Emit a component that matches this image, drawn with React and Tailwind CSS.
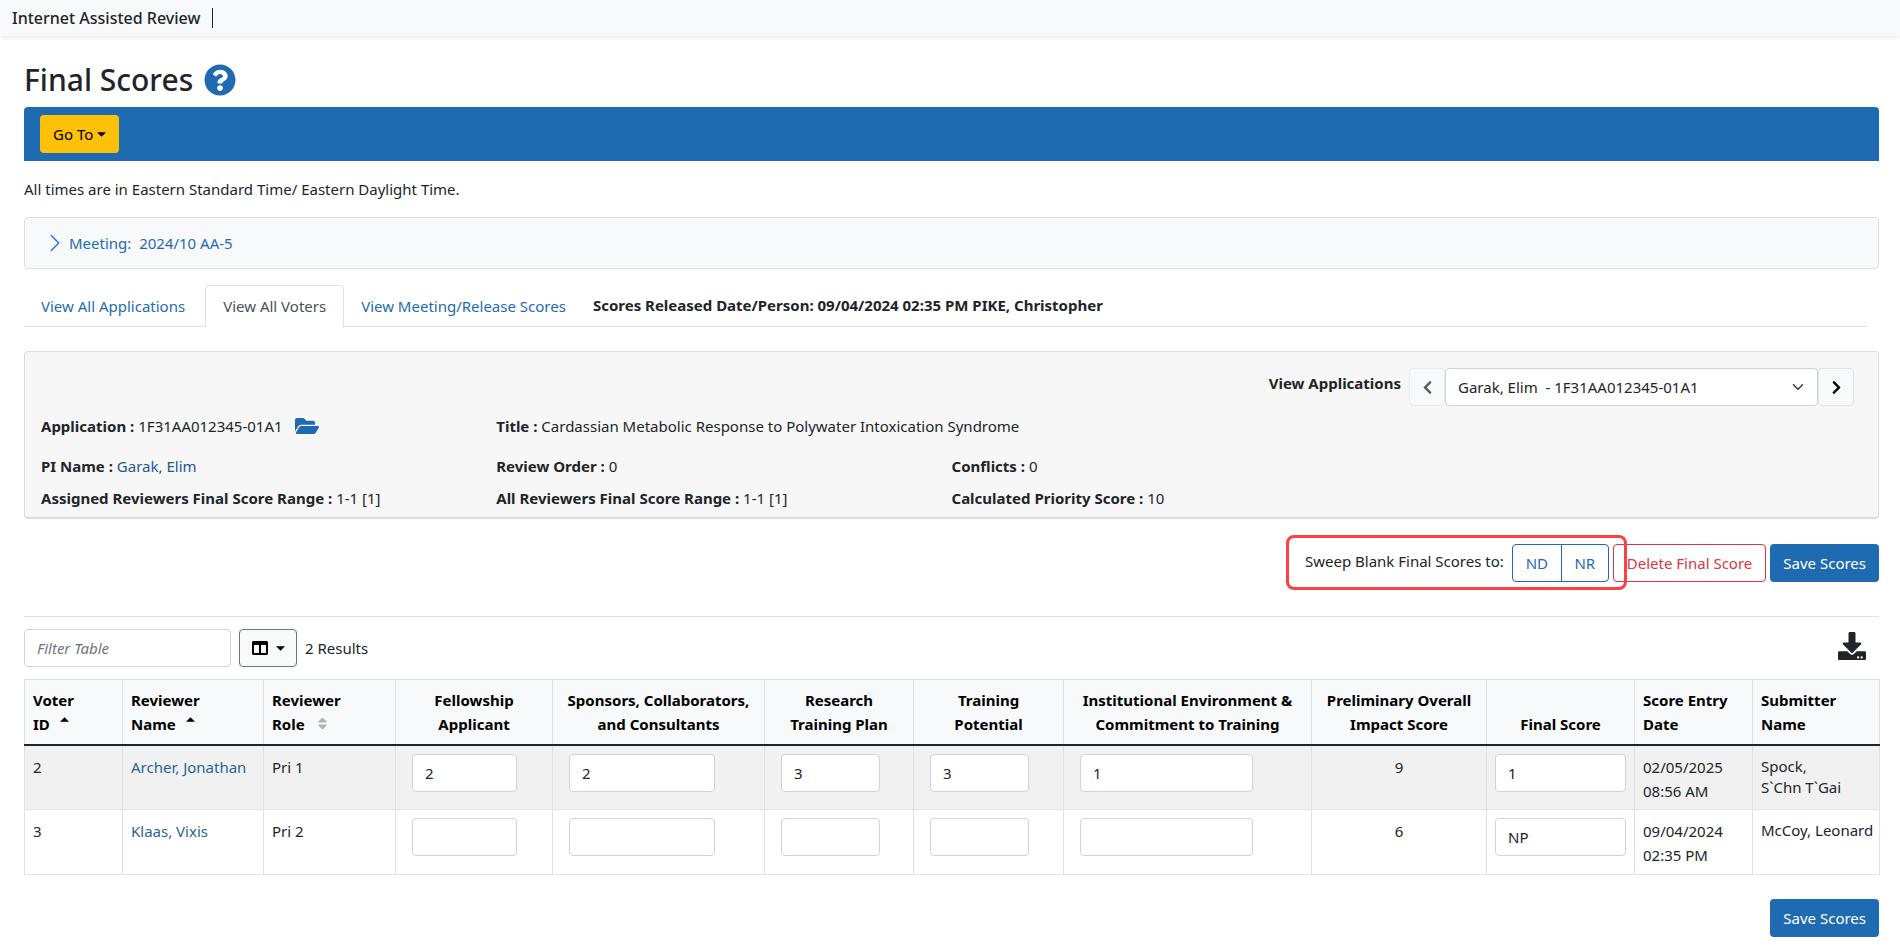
import { useState } from "react";
import {
  FaChevronLeft,
  FaChevronRight,
  FaColumns,
  FaDownload,
  FaFolderOpen,
  FaQuestionCircle,
  FaSort,
} from "react-icons/fa";
import { BsChevronRight } from "react-icons/bs";

const columns = [
  { key: "id", lines: ["Voter", "ID"], col: "w-[98px]", sort: "asc" },
  { key: "name", lines: ["Reviewer", "Name"], col: "w-[141px]", sort: "asc" },
  { key: "role", lines: ["Reviewer", "Role"], col: "w-[132px]", sort: "none" },
  { key: "applicant", lines: ["Fellowship", "Applicant"], col: "w-[157px]", input: "w-[105px]", center: true },
  { key: "sponsors", lines: ["Sponsors, Collaborators,", "and Consultants"], col: "w-[212px]", input: "w-[146px]", center: true },
  { key: "plan", lines: ["Research", "Training Plan"], col: "w-[149px]", input: "w-[99px]", center: true },
  { key: "potential", lines: ["Training", "Potential"], col: "w-[150px]", input: "w-[99px]", center: true },
  { key: "environment", lines: ["Institutional Environment &", "Commitment to Training"], col: "w-[248px]", input: "w-[173px]", center: true },
  { key: "impact", lines: ["Preliminary Overall", "Impact Score"], col: "w-[175px]", center: true },
  { key: "final", lines: ["Final Score"], col: "w-[148px]", input: "w-full", center: true },
  { key: "date", lines: ["Score Entry", "Date"], col: "w-[118px]" },
  { key: "submitter", lines: ["Submitter", "Name"], col: "w-[127px]" },
];

const initialRows = [
  {
    id: "2",
    name: "Archer, Jonathan",
    role: "Pri 1",
    applicant: "2",
    sponsors: "2",
    plan: "3",
    potential: "3",
    environment: "1",
    impact: "9",
    final: "1",
    date: ["02/05/2025", "08:56 AM"],
    submitter: ["Spock,", "S`Chn T`Gai"],
  },
  {
    id: "3",
    name: "Klaas, Vixis",
    role: "Pri 2",
    applicant: "",
    sponsors: "",
    plan: "",
    potential: "",
    environment: "",
    impact: "6",
    final: "NP",
    date: ["09/04/2024", "02:35 PM"],
    submitter: ["McCoy, Leonard"],
  },
];

function Caret({ up }) {
  return (
    <svg viewBox="0 0 10 5" className="block w-[9px] h-[5px]" fill="currentColor" aria-hidden="true">
      <path d={up ? "M0 5L5 0L10 5Z" : "M0 0L5 5L10 0Z"} />
    </svg>
  );
}

function SortIcon({ sort }) {
  if (sort === "asc") {
    return (
      <span className="pb-2">
        <Caret up />
      </span>
    );
  }
  if (sort === "none") {
    return <FaSort className="text-[#adb5bd]" />;
  }
  return null;
}

function Field({ label, children }) {
  return (
    <div>
      <strong className="font-bold">{label} :</strong> {children}
    </div>
  );
}

function SaveButton() {
  return (
    <button type="button" className="h-[38px] rounded bg-[#1f6bb1] px-[13px] text-white whitespace-nowrap">
      Save Scores
    </button>
  );
}

function Cell({ column, row, onChange }) {
  const value = row[column.key];

  if (column.input) {
    return (
      <td className={column.key === "final" ? "border border-[#dee2e6] px-2 pt-2" : "border border-[#dee2e6] px-4 pt-2"}>
        <input
          type="text"
          aria-label={`${column.lines.join(" ")} for ${row.name}`}
          value={value}
          onChange={(e) => onChange(row.id, column.key, e.target.value)}
          className={`block h-[38px] rounded border border-[#ced4da] bg-white px-3 outline-none ${column.input}`}
        />
      </td>
    );
  }

  if (column.key === "name") {
    return (
      <td className="border border-[#dee2e6] px-2 pt-[9px]">
        <a href="#reviewer" className="text-[#2a6496] whitespace-nowrap">{value}</a>
      </td>
    );
  }

  if (column.key === "submitter") {
    return (
      <td className="border border-[#dee2e6] pl-2 pt-[10px] leading-[21px] whitespace-nowrap">
        {value.map((line) => (
          <div key={line}>{line}</div>
        ))}
      </td>
    );
  }

  return (
    <td className={`border border-[#dee2e6] px-2 pt-[9px] ${column.center ? "text-center" : ""}`}>
      {Array.isArray(value) ? value.map((line) => <div key={line}>{line}</div>) : value}
    </td>
  );
}

function App() {
  const [rows, setRows] = useState(initialRows);
  const [filter, setFilter] = useState("");

  const handleChange = (id, key, value) => {
    setRows(rows.map((row) => (row.id === id ? { ...row, [key]: value } : row)));
  };

  const visible = rows.filter((row) => row.name.toLowerCase().includes(filter.toLowerCase()));

  return (
    <div className="min-h-screen bg-white font-['Noto_Sans','Open_Sans',sans-serif] text-[15px] leading-6 text-[#212529]">
      <header className="flex h-9 items-center bg-[#f8f9fb] px-3 shadow-[0_2px_4px_rgba(0,0,0,0.08)]">
        <span className="border-r border-[#212529] pr-3 text-base leading-5 font-medium">
          Internet Assisted Review
        </span>
      </header>

      <main className="pl-6 pr-[21px] pt-6 pb-3">
        {/* Page title */}
        <div className="flex h-10 items-center gap-[11px]">
          <h1 className="text-[30px] leading-10 font-medium">Final Scores</h1>
          <a href="#help" aria-label="Help" className="text-[#1f6bb1]">
            <FaQuestionCircle className="size-8" />
          </a>
        </div>

        {/* Go To bar */}
        <nav className="mt-[7px] flex h-[54px] items-center rounded-t-sm bg-[#1f6bb1] px-4">
          <button type="button" className="flex h-[38px] items-center gap-1 rounded bg-[#ffc107] px-[13px] text-black">
            Go To
            <Caret />
          </button>
        </nav>

        <p className="mt-4">All times are in Eastern Standard Time/ Eastern Daylight Time.</p>

        {/* Meeting accordion */}
        <section className="mt-4 flex h-[52px] items-center rounded border border-[#dee0e3] bg-[#f8f9fb] px-5">
          <button type="button" aria-expanded="false" className="flex items-center gap-1 text-[#1f6bb1]">
            <BsChevronRight className="size-5 text-[#0d6efd]" />
            <span className="whitespace-pre">Meeting:  2024/10 AA-5</span>
          </button>
        </section>

        {/* Tabs */}
        <div className="mt-4 mr-3 flex h-[42px] border-b border-[#dee2e6] text-[#1f6bb1]">
          <a href="#applications" className="pt-[9px] pr-5 pl-[17px]">View All Applications</a>
          <a
            href="#voters"
            aria-current="page"
            className="-mb-px rounded-t border border-b-0 border-[#dee2e6] bg-white px-[17px] pt-2 text-[#495057]"
          >
            View All Voters
          </a>
          <a href="#meeting" className="px-[17px] pt-[9px]">View Meeting/Release Scores</a>
          <strong className="pl-[10px] pt-2 font-bold text-[#212529]">
            Scores Released Date/Person: 09/04/2024 02:35 PM PIKE, Christopher
          </strong>
        </div>

        {/* Application details */}
        <section className="mt-6 rounded border border-b-2 border-[#dcdcdc] bg-[#f7f7f7] pt-4 pb-[7px]">
          <div className="flex justify-end pr-6">
            <label htmlFor="application" className="mr-2 pt-[3px] font-bold">View Applications</label>
            <button
              type="button"
              aria-label="Previous application"
              className="flex h-[38px] w-9 items-center justify-center rounded border border-[#e6e9ed] bg-[#f8f9fa] text-[#5c5c5c]"
            >
              <FaChevronLeft />
            </button>
            <div className="relative w-[373px]">
              <select
                id="application"
                className="h-[38px] w-full appearance-none rounded border border-[#ced4da] bg-white pl-3 pr-9 outline-none"
              >
                <option>Garak, Elim &nbsp;- 1F31AA012345-01A1</option>
              </select>
              <svg
                viewBox="0 0 16 16"
                className="pointer-events-none absolute top-[13px] right-[14px] size-3"
                fill="none"
                stroke="#343a40"
                strokeWidth="2"
                strokeLinecap="round"
                strokeLinejoin="round"
              >
                <path d="m2 5 6 6 6-6" />
              </svg>
            </div>
            <button
              type="button"
              aria-label="Next application"
              className="flex h-[38px] w-9 items-center justify-center rounded border border-[#dfe2e6] bg-[#f8f9fa] text-black"
            >
              <FaChevronRight />
            </button>
          </div>

          <div className="mt-2 grid grid-cols-4 gap-y-2 px-4">
            <div className="flex h-8 items-start">
              <strong className="mr-1 font-bold">Application :</strong>
              1F31AA012345-01A1
              <a href="#folder" aria-label="Open folder" className="ml-3 text-[#1f6bb1]">
                <FaFolderOpen className="size-6" />
              </a>
            </div>
            <div className="col-span-3">
              <Field label="Title">Cardassian Metabolic Response to Polywater Intoxication Syndrome</Field>
            </div>
            <Field label="PI Name">
              <a href="#pi" className="text-[#23598f]">Garak, Elim</a>
            </Field>
            <Field label="Review Order">0</Field>
            <div className="col-span-2">
              <Field label="Conflicts">0</Field>
            </div>
            <Field label="Assigned Reviewers Final Score Range">1-1 [1]</Field>
            <Field label="All Reviewers Final Score Range">1-1 [1]</Field>
            <Field label="Calculated Priority Score">10</Field>
          </div>
        </section>

        {/* Score actions */}
        <div className="mt-4 flex h-[55px] items-center justify-end">
          <div className="relative z-10 -mr-[14px] flex h-full items-center rounded-lg border-3 border-[#fb4141] pr-[15px] pl-4">
            <span className="mr-2 pb-1">Sweep Blank Final Scores to:</span>
            <button type="button" className="h-[38px] w-[50px] rounded-l border border-[#1f6bb1] bg-white text-[#1f6bb1]">
              ND
            </button>
            <button type="button" className="-ml-px h-[38px] w-12 rounded-r border border-[#1f6bb1] bg-white text-[#1f6bb1]">
              NR
            </button>
          </div>
          <button type="button" className="mr-1 h-[38px] rounded border border-[#dc3545] px-[13px] text-[#dc3545] whitespace-nowrap">
            Delete Final Score
          </button>
          <SaveButton />
        </div>

        <hr className="mt-[26px] border-[#dee2e6]" />

        {/* Table toolbar */}
        <div className="mt-3 flex items-center">
          <input
            type="text"
            aria-label="Filter Table"
            placeholder="Filter Table"
            value={filter}
            onChange={(e) => setFilter(e.target.value)}
            className="h-[38px] w-[207px] rounded border border-[#ced4da] px-3 outline-none placeholder:text-[#6c757d] placeholder:italic"
          />
          <button
            type="button"
            aria-label="Choose columns"
            className="ml-2 flex h-[38px] w-[58px] items-center justify-center gap-2 rounded border border-[#6c757d] bg-[#f8f9fa] text-black"
          >
            <FaColumns className="size-4" />
            <Caret />
          </button>
          <span className="ml-2">{visible.length} Results</span>
          <button type="button" aria-label="Download table" className="mr-[13px] mb-1 ml-auto">
            <FaDownload className="size-7" />
          </button>
        </div>

        <table className="mt-3 w-full table-fixed border-collapse">
          <colgroup>
            {columns.map((column) => (
              <col key={column.key} className={column.col} />
            ))}
          </colgroup>
          <thead>
            <tr className="h-[65px] border-b-2 border-[#212529] bg-[#f8f9fb] text-black">
              {columns.map((column) => (
                <th
                  key={column.key}
                  className={`border-x border-t border-x-[#dee2e6] border-t-[#dee2e6] px-2 pb-2 align-bottom font-bold whitespace-nowrap ${column.center ? "text-center" : "text-left"}`}
                >
                  {column.lines.map((line, i) => (
                    <div key={line} className={column.sort ? "flex h-6 items-center gap-[10px]" : "h-6"}>
                      {line}
                      {i === 1 && <SortIcon sort={column.sort} />}
                    </div>
                  ))}
                </th>
              ))}
            </tr>
          </thead>
          <tbody>
            {visible.map((row) => (
              <tr key={row.id} className="h-[65px] align-top odd:bg-[#f1f1f1]">
                {columns.map((column) => (
                  <Cell key={column.key} column={column} row={row} onChange={handleChange} />
                ))}
              </tr>
            ))}
          </tbody>
        </table>

        <div className="mt-6 flex justify-end">
          <SaveButton />
        </div>
      </main>
    </div>
  );
}

export default App;
